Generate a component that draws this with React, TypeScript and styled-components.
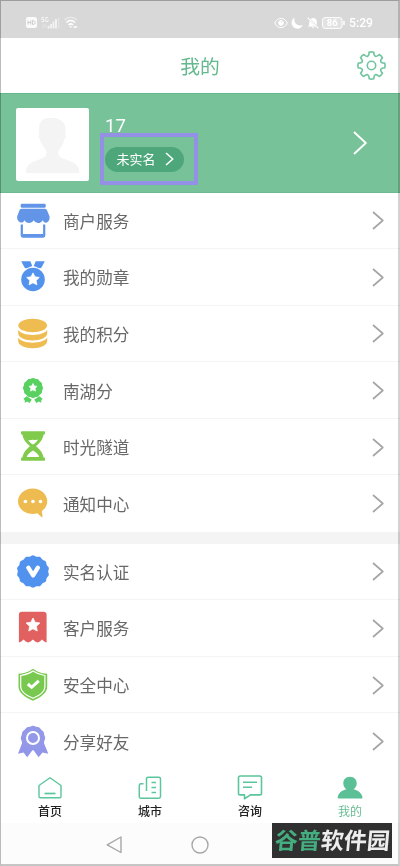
import React from 'react';
import styled, { createGlobalStyle } from 'styled-components';

const Global = createGlobalStyle`
  * { box-sizing: border-box; }
  body { margin: 0; background: #fff; font-family: Roboto, "Noto Sans CJK SC", sans-serif; }
  svg { display: block; flex: none; }
`;

const Screen = styled.div`
  position: relative;
  width: 400px;
  height: 866px;
  overflow: hidden;
  display: flex;
  flex-direction: column;
  background: #fff;
`;
const Frame = styled.div`
  position: absolute;
  inset: 0;
  border: solid #bcbcbc;
  border-width: 1px 2px 2px 1px;
  border-right-color: #d2d2d2;
  border-bottom-color: #c8c8c8;
  border-top-color: #b9b9b9;
  mix-blend-mode: multiply;
  pointer-events: none;
`;
const StatusBar = styled.header`
  height: 37.5px;
  flex: none;
  padding: 8px 27px 0 26px;
  display: flex;
  align-items: center;
  justify-content: space-between;
  background: #d8d8d8;
  color: #fff;
`;
const StatusGroup = styled.div<{ $gap: number }>`
  display: flex;
  align-items: center;
  gap: ${(p) => p.$gap}px;
`;
const Clock = styled.span`
  width: 24px;
  font-size: 12.2px;
  line-height: 14px;
  font-weight: 500;
  white-space: nowrap;
`;
const TitleBar = styled.div`
  height: 55px;
  flex: none;
  padding: 0 14px;
  display: grid;
  grid-template-columns: 29px 1fr 29px;
  align-items: center;
`;
const Title = styled.h1`
  margin: 0;
  padding-top: 5px;
  text-align: center;
  color: #62b98d;
  font-size: 19.8px;
  line-height: 28px;
  font-weight: 400;
`;
const Profile = styled.section`
  height: 100px;
  flex: none;
  padding: 14px 33px 0 16px;
  display: flex;
  background: #77c299;
  border-top: 1px solid #62b98b;
  border-bottom: 1px solid #6abb91;
`;
const Avatar = styled.div`
  width: 73px;
  height: 73px;
  overflow: hidden;
  border-radius: 2px;
  background: #fff;
`;
const Identity = styled.div`
  flex: 1;
  padding: 7px 0 0 16px;
  color: #fff;
`;
const UserName = styled.div`
  height: 22px;
  font-size: 18.5px;
  line-height: 22px;
  font-weight: 400;
`;
const VerifyPill = styled.div`
  width: 79px;
  height: 25px;
  margin-top: 10px;
  padding: 0 10px 0 11.5px;
  display: flex;
  align-items: center;
  justify-content: space-between;
  border-radius: 13px;
  background: #4ea67b;
  font-size: 13px;
  line-height: 25px;
`;
const ProfileArrow = styled.div`
  padding-top: 23px;
`;
const Highlight = styled.div`
  position: absolute;
  left: 100px;
  top: 133px;
  width: 98px;
  height: 52px;
  border: 4px solid #9390e6;
`;
const Menu = styled.ul`
  margin: 0;
  padding: 0;
  list-style: none;
`;
const MenuRow = styled.li`
  height: 56.6px;
  padding: 1px 16px 0 15px;
  display: flex;
  align-items: center;
  border-bottom: 1px solid #f4f4f4;
  &:last-child { border-bottom-color: transparent; }
`;
const MenuLabel = styled.span`
  flex: 1;
  padding: 4px 0 0 12px;
  font-size: 16.6px;
  line-height: 24px;
  color: #686868;
`;
const Gap = styled.div`
  height: 11.5px;
  flex: none;
  background: #f4f4f4;
`;
const TabBar = styled.nav`
  height: 53px;
  flex: none;
  display: grid;
  grid-template-columns: repeat(4, 1fr);
`;
const Tab = styled.div<{ $active?: boolean }>`
  padding-top: 4px;
  display: flex;
  flex-direction: column;
  align-items: center;
  gap: 1.5px;
  font-size: 12px;
  line-height: 18px;
  font-weight: ${(p) => (p.$active ? 400 : 500)};
  color: ${(p) => (p.$active ? '#67bd93' : '#222')};
`;
const SystemBar = styled.footer`
  flex: 1;
  padding: 1px 0 0 106px;
  display: flex;
  align-items: center;
  gap: 68px;
  background: #fcfcfc;
`;
const Watermark = styled.div`
  position: absolute;
  left: 272px;
  top: 823px;
  width: 120px;
  height: 35px;
  display: flex;
  align-items: center;
  justify-content: center;
  background: #303030;
`;
const WatermarkText = styled.span<{ $green?: boolean }>`
  font-family: "Noto Sans CJK SC", sans-serif;
  font-size: 23px;
  line-height: 33px;
  padding-bottom: 2px;
  font-weight: 700;
  transform: skewX(-5deg);
  color: ${(p) => (p.$green ? '#45ae80' : '#ededed')};
`;

const star = (cx: number, cy: number, r: number) =>
  Array.from({ length: 10 }, (_, i) => {
    const a = (i * Math.PI) / 5 - Math.PI / 2;
    const d = i % 2 ? r * 0.5 : r;
    return `${(cx + Math.cos(a) * d).toFixed(2)},${(cy + Math.sin(a) * d).toFixed(2)}`;
  }).join(' ');

const wave = (cx: number, cy: number, r: number, depth: number, lobes: number) =>
  Array.from({ length: 144 }, (_, i) => {
    const a = (i * Math.PI) / 72;
    const d = r - depth + depth * Math.cos(a * lobes);
    return `${(cx + Math.sin(a) * d).toFixed(2)},${(cy - Math.cos(a) * d).toFixed(2)}`;
  }).join(' ');

const Star = ({ cx, cy, r }: { cx: number; cy: number; r: number }) => (
  <polygon points={star(cx, cy, r)} fill="#fff" stroke="#fff" strokeWidth=".8" strokeLinejoin="round" />
);

const icons: Record<string, React.ReactNode> = {
  shop: (
    <g fill="#6295e7">
      <rect x="5.7" y=".8" width="25" height="4" rx="1.2" />
      <path d="M6.5 5.8h23.2c1.3 0 2 .8 2.6 2.1l2.2 5.3c.6 3.2-.8 5.4-2.8 6.3-1.5.6-3.1-.4-4.1-2.2-1 1.9-2.5 2.8-4.2 2.8s-3.5-1-4.7-2.800c-1.200 1.800-2.800 2.800-4.700 2.800-2 0-3.500-1-4.500-2.800-1 1.800-2.600 2.700-4 2.100-2.500-1-3.800-3.200-3.300-6.200l2-5.300c.5-1.300 1.200-2.100 2.300-2.100z" />
      <path d="M6.800 21.600v11c0 .6.400 1 1 1h20.400c.6 0 1-.4 1-1v-11" fill="none" stroke="#5b93ec" strokeWidth="2.200" />
      <path d="M6 31h24v1.700c0 .8-.7 1.400-1.500 1.400h-21C6.700 34.100 6 33.500 6 32.700z" />
    </g>
  ),
  medal: (
    <g fill="#5493ed">
      <path d="M6.200 2.200h9.100l2 4.700-5.700 2.300c-1 .4-1.700-.1-2.200-1zM29.800 2.200h-9.100l-2 4.700 5.700 2.300c1 .4 1.700-.1 2.200-1z" />
      <circle cx="18" cy="20.500" r="11.8" />
      <Star cx={18} cy={20.5} r={6.6} />
    </g>
  ),
  coins: (
    <g fill="#eebc50">
      <ellipse cx="17.700" cy="9.500" rx="14.400" ry="6.700" />
      <path d="M3.200 13.800c1.800 3.300 7.600 5.200 14.500 5.200s12.700-1.900 14.500-5.200v3.600c0 3.700-6.500 7-14.500 7s-14.500-3.300-14.500-7z" />
      <path d="M3.200 21.600c1.800 3.300 7.600 5.200 14.500 5.200s12.700-1.900 14.500-5.200v3.600c0 3.700-6.500 7-14.500 7s-14.500-3.300-14.500-7z" />
    </g>
  ),
  badge: (
    <g fill="#59d161">
      <polygon points={wave(18, 15, 10, 0.25, 12)} />
      <path d="M11.700 23.200l5 3.200-2 3.600-2.500-1.400-2.400 1.200-.1-2.500-1.300-1.500zM24.300 23.200l-5 3.200 2 3.600 2.500-1.400 2.400 1.200.1-2.500 1.300-1.500z" />
      <Star cx={18} cy={14.7} r={4.2} />
    </g>
  ),
  hourglass: (
    <g fill="#80cb4c">
      <rect x="6" y="2.300" width="24" height="3.200" rx=".8" />
      <rect x="6" y="28.500" width="24" height="3.200" rx=".8" />
      <path d="M7.300 4h21.400c-.3 6-3.500 9.500-7.700 13.200 4.200 3.500 7.400 7 7.700 13H7.300c.3-6 3.500-9.500 7.700-13C10.800 13.500 7.600 10 7.300 4z" />
      <path d="M13.200 10.900c1.800.9 3.100-.3 5-.2 1.600.1 2.800.6 4.700-.2-.9 2.200-2.500 3.600-4.900 5.100-2-1.300-3.800-2.700-4.800-4.700zM18 21.500c3 1.900 5.800 4 6.200 6.500H11.800c.4-2.500 3.200-4.600 6.200-6.500z" fill="#fff" />
    </g>
  ),
  message: (
    <>
      <path d="M17.700 2.400C9.600 2.400 3 8.200 3 15.300s6.600 12.600 14.700 12.600c1.700 0 3.300-.2 4.700-.7l4 3.700c.7.600 1.200.3 1.100-.6l-.6-5.300c3.300-2.300 5.400-5.700 5.400-9.700C32.300 8.200 25.800 2.400 17.700 2.400z" fill="#eebb50" />
      <g fill="#fff"><circle cx="10.400" cy="15.500" r="1.800" /><circle cx="18" cy="15.500" r="1.800" /><circle cx="25.500" cy="15.500" r="1.800" /></g>
    </>
  ),
  verified: (
    <>
      <polygon points={wave(18, 17.5, 16.2, 0.5, 14)} fill="#5192ef" />
      <path d="M13.300 13.700l4.800 7.700 4.800-7.700" fill="none" stroke="#fff" strokeWidth="4.300" strokeLinecap="round" strokeLinejoin="round" />
    </>
  ),
  service: (
    <>
      <path d="M3.900 4.800c0-1.800 1-3 2.800-3h22c1.800 0 2.900 1.200 2.900 3v27.800c-2-.5-3-1.500-4.500-3-1.700 1.500-2.700 2.500-4.500 3-2-.5-3-1.500-4.700-3-1.700 1.500-2.800 2.500-4.700 3-1.900-.5-3-1.500-4.700-3-1.500 1.500-2.600 2.500-4.600 3z" fill="#e0615f" />
      <Star cx={18} cy={15.2} r={7.2} />
    </>
  ),
  shield: (
    <>
      <path d="M18 1.700c4 3.200 8 4.500 14.200 5.100v13c0 6.500-7.200 11-14.200 13.900-7-2.900-14.500-7.400-14.500-13.900v-13C10 6.200 14 4.900 18 1.700z" fill="#79c950" />
      <path d="M18 4.100c4 2.800 7.300 3.800 11.900 4.400v11.200c0 5.300-5.900 9.100-11.900 11.600-6-2.500-12.300-6.300-12.300-11.600V8.500C10.600 7.900 14 6.900 18 4.100z" fill="none" stroke="#fff" strokeWidth="1.200" />
      <path d="M12.800 17l3.800 3.300 7.200-6.500" fill="none" stroke="#fff" strokeWidth="3" />
    </>
  ),
  share: (
    <>
      <path d="M8.300 16l-5.300 13.800 5.600-1.200 3.600 4.700 5.800-7.900 5.600 7.900 3.900-4.700 5.800 1.200L27.700 16z" fill="#9296e8" />
      <polygon points={wave(18, 14, 12.2, 0.25, 12)} fill="#9398e9" />
      <circle cx="18" cy="14" r="6" fill="none" stroke="#fff" strokeWidth="2" />
    </>
  ),
};

const Chevron = ({ w, h, color, stroke }: { w: number; h: number; color: string; stroke: number }) => (
  <svg width={w} height={h} viewBox={`0 0 ${w} ${h}`} fill="none" stroke={color} strokeWidth={stroke}>
    <path d={`M1 1L${w - 1.2} ${h / 2}L1 ${h - 1}`} strokeLinejoin="round" />
  </svg>
);

const Rows = ({ items }: { items: [string, string][] }) => (
  <Menu>
    {items.map(([icon, label]) => (
      <MenuRow key={icon}>
        <svg width="36" height="36" viewBox="0 0 36 36">{icons[icon]}</svg>
        <MenuLabel>{label}</MenuLabel>
        <Chevron w={12} h={19} color="#a6a6a6" stroke={1.7} />
      </MenuRow>
    ))}
  </Menu>
);

const gear = (() => {
  const c = 14.5;
  const at = (deg: number, r: number) => {
    const a = (deg * Math.PI) / 180;
    return `${(c + Math.sin(a) * r).toFixed(2)} ${(c - Math.cos(a) * r).toFixed(2)}`;
  };
  let d = `M${at(-11, 13.4)}`;
  for (let i = 0; i < 8; i++) {
    const a = i * 45;
    d += `Q${at(a, 14)} ${at(a + 10, 13.4)}L${at(a + 12, 11.7)}Q${at(a + 22.5, 8.6)} ${at(a + 33, 11.7)}L${at(a + 35, 13.4)}`;
  }
  return d + 'Z';
})();

export default function App() {
  return (
    <>
      <Global />
      <Screen>
        <StatusBar>
          <StatusGroup $gap={4}>
            <svg width="11" height="11" viewBox="0 0 11 11">
              <rect width="11" height="11" rx="2" fill="#fafafa" />
              <path d="M2 3.500v4M4.800 3.500v4M2 5.500h2.800M6.500 3.500v4c3.500.3 3.500-4.300 0-4z" fill="none" stroke="#ccc" />
            </svg>
            <svg width="19" height="14" viewBox="0 0 19 14">
              <path d="M3 1.500H.8v2H3v2H.6M7 1.500H4.800v4H7v-2" fill="none" stroke="#f4f4f4" />
              <path d="M1 9h4M1 11h4" stroke="#e3e3e3" />
              <path d="M7.500 12.500V10M10 12.500V8M12.500 12.500V5.500M15 12.500V3" stroke="#f4f4f4" strokeWidth="1.800" />
              <path d="M17.700 12.500V1.500" stroke="#e3e3e3" strokeWidth="1.500" />
            </svg>
            <svg width="14" height="13" viewBox="0 0 14 13" fill="none">
              <path d="M.5 4C4 .3 9.500.3 13 4" stroke="#e9e9e9" strokeWidth="1.400" />
              <path d="M2.500 6.500c2.500-2.600 6-2.600 8.500 0M4.500 9c1.500-1.500 3-1.500 4.500 0" stroke="#fff" strokeWidth="1.500" />
              <path d="M6.700 12l-1.500-1.800h3z" fill="#fff" /><path d="M9.500 11h3.500" stroke="#f4f4f4" strokeWidth="2" />
            </svg>
          </StatusGroup>
          <StatusGroup $gap={3.6}>
            <svg width="14" height="12" viewBox="0 0 14 12" fill="none" stroke="#fff">
              <path d="M.7 6C3.500-.2 10.500-.2 13.300 6 10.500 12.200 3.500 12.200.7 6z" /><circle cx="7" cy="6" r="2.400" fill="#fff" /><circle cx="7.600" cy="5.200" r=".6" fill="#d8d8d8" stroke="none" />
            </svg>
            <svg width="12" height="12" viewBox="0 0 12 12"><path d="M3.500.3C.2 3-.3 7 2.200 9.800c2.800 3 7.800 2.200 9.600-1.600C6.500 9.600 2.300 6 3.500.3z" fill="#fff" /></svg>
            <svg width="12" height="12" viewBox="0 0 12 12">
              <path d="M4 1.800C6.500-.2 9.800 1.500 9.800 4.600V8L3.500 2.200zM2.200 3.800v4L.8 9.600h8.100zM4.700 10.200h2.700c-.4 1.500-2.300 1.500-2.700 0z" fill="#fff" /><path d="M.6.6l10.800 10.800" stroke="#fff" strokeWidth="1.200" />
            </svg>
            <svg width="23" height="12" viewBox="0 0 23 12">
              <rect x=".6" y=".6" width="19.500" height="10.800" rx="2.500" fill="#e2e2e2" stroke="#fff" /><path d="M22 4v4" stroke="#fff" strokeWidth="1.500" />
              <text x="10.300" y="9.400" textAnchor="middle" fontSize="9.500" fontWeight="700" fontFamily="Roboto, sans-serif" fill="#fff">86</text>
            </svg>
            <Clock>5:29</Clock>
          </StatusGroup>
        </StatusBar>
        <TitleBar>
          <span />
          <Title>我的</Title>
          <svg width="29" height="29" viewBox="0 0 29 29" fill="none" stroke="#70c59e" strokeWidth="1.600" strokeLinejoin="round">
            <path d={gear} /><circle cx="14.500" cy="14.500" r="4.200" />
          </svg>
        </TitleBar>
        <Profile>
          <Avatar>
            <svg width="73" height="73" viewBox="0 0 73 73">
              <path d="M10 65c0-7 3-9.500 8-11.500l9-3.500c2.500-1 3.500-3 3.500-5.500 0-2-1.500-3.500-2.500-5.500-2-2-3.500-4-4-7.500-1.500-2-2-4-.8-5.500C22 16 25 10 33 10c8-1 16 3 16.500 10 .3 2-.2 4-.2 6 1 2 .5 4-1 5.500-.6 3.500-1.800 6-4 8-1 2-2 3.500-2 5.500 0 2.500 1 4 3.500 5l9 3.500c5 2 8.500 4.500 8.500 11.500z" fill="#f4f4f4" />
            </svg>
          </Avatar>
          <Identity>
            <UserName>17</UserName>
            <VerifyPill>未实名<Chevron w={9} h={14} color="#fff" stroke={1.6} /></VerifyPill>
          </Identity>
          <ProfileArrow><Chevron w={14} h={24} color="#fff" stroke={1.9} /></ProfileArrow>
        </Profile>
        <Rows items={[['shop', '商户服务'], ['medal', '我的勋章'], ['coins', '我的积分'], ['badge', '南湖分'], ['hourglass', '时光隧道'], ['message', '通知中心']]} />
        <Gap />
        <Rows items={[['verified', '实名认证'], ['service', '客户服务'], ['shield', '安全中心'], ['share', '分享好友']]} />
        <TabBar>
          <Tab>
            <svg width="28" height="28" viewBox="0 0 28 28" fill="none" stroke="#5bc59b" strokeWidth="1.400" strokeLinejoin="round">
              <path d="M14 3.800L3 11.500v11c0 .8.500 1.300 1.300 1.300h19.400c.8 0 1.300-.5 1.300-1.300v-11z" /><path d="M8.500 19.500h11" strokeWidth="1.700" />
            </svg>首页
          </Tab>
          <Tab>
            <svg width="28" height="28" viewBox="0 0 28 28" fill="none" stroke="#5bc59b" strokeWidth="1.500" strokeLinejoin="round">
              <path d="M10.500 17V5c0-1.200.6-1.800 1.800-1.800h10.500c1 0 1.700.7 1.700 1.800v17.500c0 1-.7 1.700-1.700 1.700H5c-1 0-1.700-.7-1.700-1.700V11.500c0-1 .7-1.700 1.700-1.700h2.500M15.500 8.500H20M15.500 13.500H20M15.500 18.500H20" />
            </svg>城市
          </Tab>
          <Tab>
            <svg width="28" height="28" viewBox="0 0 28 28" fill="none" stroke="#5bc59b" strokeWidth="1.600" strokeLinejoin="round">
              <path d="M4.200 2h19.600c1 0 1.700.7 1.700 1.700v15.500c0 1-.7 1.700-1.700 1.700h-9.300l-6 3.800v-3.800H4.200c-1 0-1.700-.7-1.700-1.700V3.700c0-1 .7-1.700 1.700-1.700zM7 8.300h14M7 13.300h9" />
            </svg>咨询
          </Tab>
          <Tab $active>
            <svg width="28" height="28" viewBox="0 0 28 28" fill="#5bc095">
              <path d="M14 2.700c-4 0-6.700 2.900-6.700 6.500 0 2.600 1.300 4.900 3.200 6.100C5.500 16.500 2 19.500 1.700 23.500c0 .6.300.9.900.9h23c.6 0 .9-.3.900-.9-.5-4-4-7-9-8.200 1.900-1.200 3.200-3.500 3.200-6.100 0-3.600-2.700-6.500-6.700-6.500z" />
            </svg>我的
          </Tab>
        </TabBar>
        <SystemBar>
          <svg width="17" height="18" viewBox="0 0 17 18" fill="none" stroke="#a8a8a8" strokeWidth="1.400" strokeLinejoin="round"><path d="M15 1v15.500L1.200 8.800z" /></svg>
          <svg width="18" height="18" viewBox="0 0 18 18" fill="none" stroke="#a8a8a8" strokeWidth="1.400"><circle cx="9" cy="9" r="8" /></svg>
        </SystemBar>
        <Highlight />
        <Frame />
        <Watermark>
          <WatermarkText $green>谷普</WatermarkText>
          <WatermarkText>软件园</WatermarkText>
        </Watermark>
      </Screen>
    </>
  );
}
